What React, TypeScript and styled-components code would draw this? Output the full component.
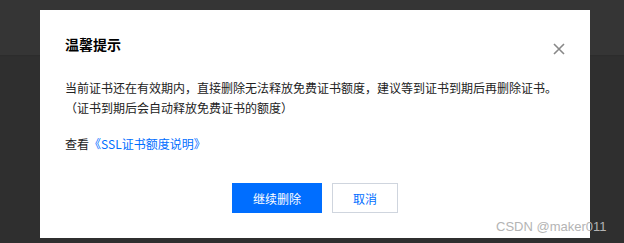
import styled, { createGlobalStyle } from 'styled-components'

const GlobalStyle = createGlobalStyle`
  html, body {
    margin: 0;
    padding: 0;
  }
  body {
    width: 624px;
    height: 243px;
    overflow: hidden;
    background: linear-gradient(to bottom, #353535 0, #353535 55px, #2b2b2b 55px, #2f2f2f 57px, #2f2f2f 100%);
    font-family: "Noto Sans CJK SC", "Liberation Sans", sans-serif;
  }
`

const Page = styled.div`
  position: relative;
  width: 624px;
  height: 243px;
  padding: 10px 0 0 40px;
  box-sizing: border-box;
`

const Dialog = styled.div`
  width: 550px;
  height: 228px;
  background: #fff;
  box-sizing: border-box;
  padding: 24px 25px 25px 25px;
  display: flex;
  flex-direction: column;
`

const Header = styled.div`
  display: flex;
  justify-content: space-between;
  align-items: center;
  height: 20px;
`

const Title = styled.h3`
  margin: 0;
  font-size: 14px;
  line-height: 20px;
  font-weight: 700;
  color: #000;
`

const CloseButton = styled.button`
  border: 0;
  background: none;
  padding: 0;
  width: 12px;
  height: 12px;
  margin-top: 9px;
  display: flex;
  cursor: pointer;
`

const Body = styled.div`
  margin-top: 24px;
  font-size: 12px;
  line-height: 20px;
  color: #222;
`

const Paragraph = styled.p`
  margin: 0;
`

const Help = styled.p`
  margin: 16px 0 0 0;
`

const Link = styled.a`
  color: #006eff;
  text-decoration: none;
`

const Footer = styled.div`
  margin-top: auto;
  display: flex;
  justify-content: center;
  gap: 10px;
`

const Button = styled.button<{ $primary?: boolean }>`
  height: 30px;
  padding: 0;
  width: ${(p) => (p.$primary ? '90px' : '66px')};
  box-sizing: border-box;
  font-family: inherit;
  font-size: 12px;
  border: 1px solid ${(p) => (p.$primary ? '#006eff' : '#cfd5de')};
  background: ${(p) => (p.$primary ? '#006eff' : '#fff')};
  color: ${(p) => (p.$primary ? '#fff' : '#006eff')};
  cursor: pointer;
`

const Watermark = styled.span`
  position: absolute;
  left: 496px;
  top: 219px;
  font-family: "Liberation Sans", Arial, sans-serif;
  font-size: 13px;
  line-height: 16px;
  color: #b4b4b4;
  white-space: nowrap;
`

const App = () => {
  return (
    <>
      <GlobalStyle />
      <Page>
        <Dialog>
          <Header>
            <Title>温馨提示</Title>
            <CloseButton aria-label="关闭">
              <svg width="12" height="12" viewBox="0 0 12 12">
                <path d="M1 1 L11 11 M11 1 L1 11" stroke="#888" strokeWidth="1.6" fill="none" />
              </svg>
            </CloseButton>
          </Header>
          <Body>
            <Paragraph>
              当前证书还在有效期内，直接删除无法释放免费证书额度，建议等到证书到期后再删除证书。
              <br />
              （证书到期后会自动释放免费证书的额度）
            </Paragraph>
            <Help>
              查看<Link href="#">《SSL证书额度说明》</Link>
            </Help>
          </Body>
          <Footer>
            <Button $primary>继续删除</Button>
            <Button>取消</Button>
          </Footer>
        </Dialog>
        <Watermark>CSDN @maker011</Watermark>
      </Page>
    </>
  )
}

export default App
